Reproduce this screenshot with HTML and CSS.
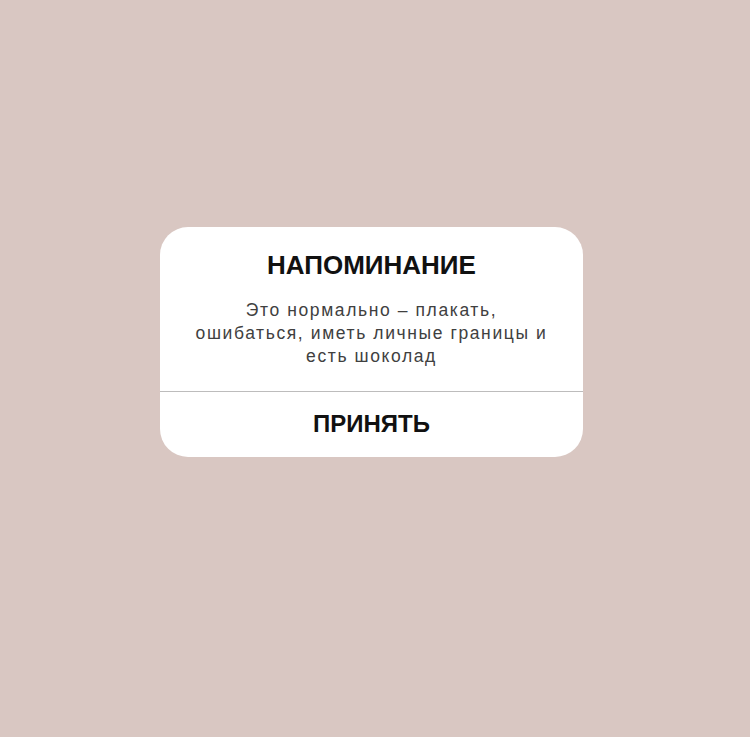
FILE: index.html
```html
<!DOCTYPE html>
<html lang="ru">
<head>
<meta charset="utf-8">
<link rel="stylesheet" href="styles.css">
</head>
<body>
<main class="stage">
  <div class="dialog">
    <div class="dialog-body">
      <h1 class="dialog-title">НАПОМИНАНИЕ</h1>
      <p class="dialog-text">Это нормально – плакать,<br>ошибаться, иметь личные границы и<br>есть шоколад</p>
    </div>
    <div class="dialog-action">ПРИНЯТЬ</div>
  </div>
</main>
</body>
</html>
```

FILE: styles.css
```css
html, body {
  margin: 0;
  padding: 0;
}
body {
  background: #d9c7c2;
  width: 750px;
  height: 737px;
  overflow: hidden;
  font-family: "Liberation Sans", Arial, sans-serif;
}
.stage {
  padding-top: 227px;
  padding-left: 160px;
}
.dialog {
  width: 423px;
  height: 230px;
  background: #ffffff;
  border-radius: 28px;
  display: flex;
  flex-direction: column;
  overflow: hidden;
}
.dialog-body {
  padding: 23px 6px 23px;
  border-bottom: 1px solid #bdbcbc;
  text-align: center;
}
.dialog-title {
  margin: 0;
  font-size: 26px;
  line-height: 30px;
  font-weight: 700;
  color: #111;
}
.dialog-text {
  margin: 19px 0 0;
  font-size: 17.5px;
  line-height: 23px;
  font-weight: 400;
  letter-spacing: 1.6px;
  color: #404040;
}
.dialog-action {
  flex: 1;
  display: flex;
  align-items: center;
  justify-content: center;
  padding-bottom: 2px;
  font-size: 24px;
  font-weight: 700;
  color: #111;
}
```
